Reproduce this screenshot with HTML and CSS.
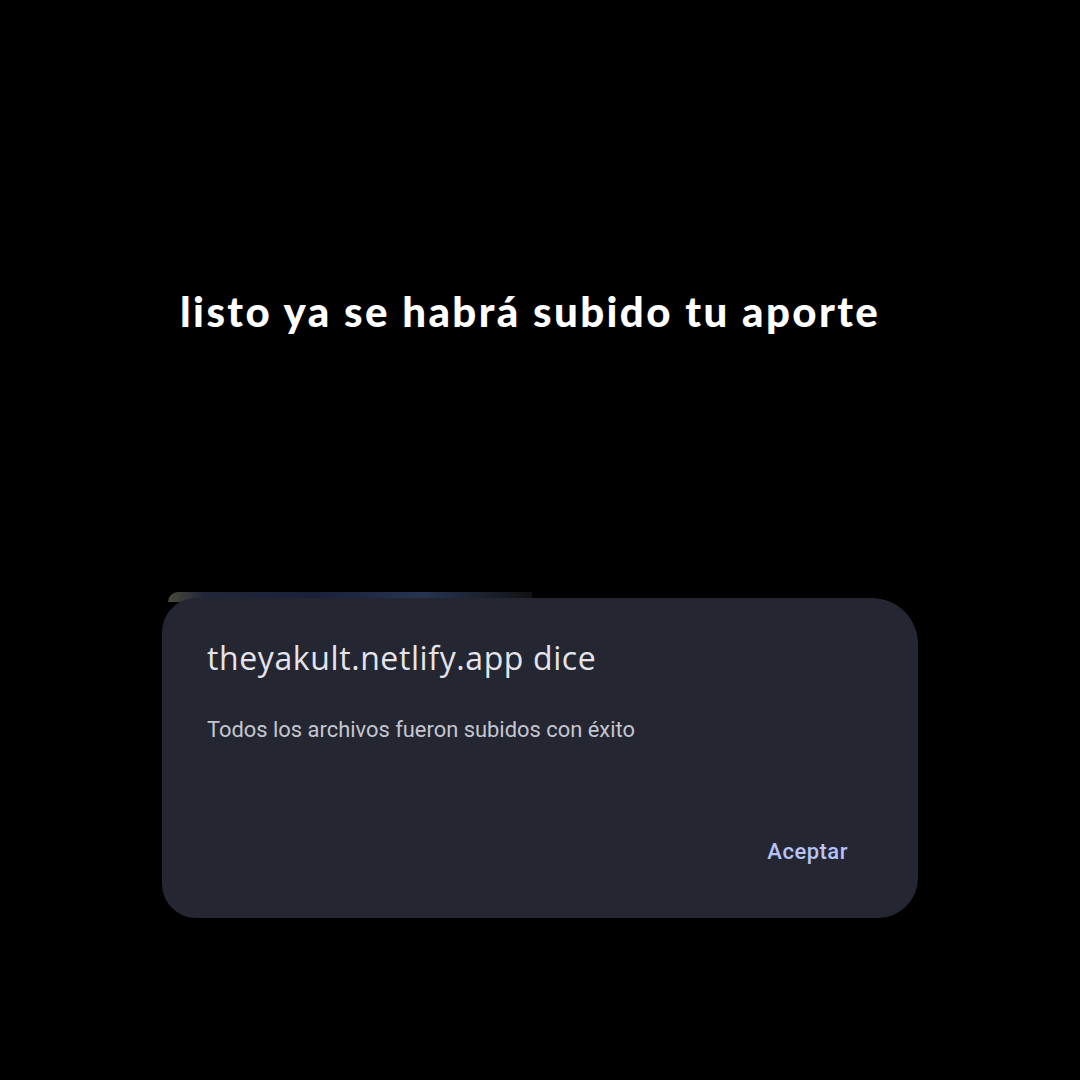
FILE: index.html
```html
<!DOCTYPE html>
<html lang="es">
<head>
<meta charset="utf-8">
<link rel="stylesheet" href="styles.css">
</head>
<body>
<main class="page">
  <h1 class="caption">listo ya se habrá subido tu aporte</h1>
  <div class="shot">
    <div class="strip"></div>
    <section class="dialog">
      <h2 class="title">theyakult.netlify.app dice</h2>
      <p class="msg">Todos los archivos fueron subidos con éxito</p>
      <div class="actions"><span class="btn">Aceptar</span></div>
    </section>
  </div>
</main>
</body>
</html>
```
FILE: styles.css
```css
html, body { margin: 0; padding: 0; background: #000; }
.page { width: 1080px; height: 1080px; display: flex; flex-direction: column; align-items: flex-start; }
.caption {
  margin: 283px 0 0 180px;
  font-family: "Lato", sans-serif; font-weight: 900; font-size: 42px; line-height: 56px;
  color: #fff; letter-spacing: 2.4px;
}
.shot { margin: 259px 0 0 162px; width: 756px; position: relative; }
.strip {
  position: absolute; left: 6px; top: -6px; width: 364px; height: 10px;
  background: linear-gradient(90deg, #4a4a3c 0%, #22263a 10%, #1a2038 40%, #263452 70%, #111 100%);
  border-radius: 30px 0 0 0;
}
.dialog {
  position: relative;
  background: #242632; height: 320px; border-radius: 34px 46px 40px 34px;
  padding: 0 70px 0 45px; box-sizing: border-box; display: flex; flex-direction: column;
}
.title {
  margin: 38px 0 0; font-family: "Open Sans", sans-serif; font-weight: 400; font-size: 32px; line-height: 44px;
  color: #e4e4ea; letter-spacing: 0.6px;
}
.msg {
  margin: 36px 0 0; font-family: "Roboto", sans-serif; font-size: 21.9px; line-height: 28px; color: #c4c6d0;
}
.actions { margin-top: 94px; display: flex; justify-content: flex-end; }
.btn { font-family: "Roboto", sans-serif; font-weight: 500; font-size: 22px; line-height: 28px; color: #b7c2f6; letter-spacing: 0.5px; }
```
